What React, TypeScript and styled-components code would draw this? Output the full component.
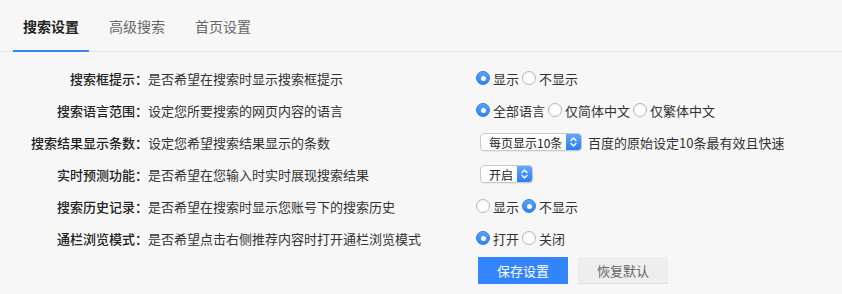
import React, { useState } from "react";
import styled, { createGlobalStyle, css } from "styled-components";

const Global = createGlobalStyle`
  html, body {
    margin: 0;
    padding: 0;
    background: #f7f7f7;
  }
  body {
    font-family: "PingFang SC", "Noto Sans CJK SC", "Noto Sans", sans-serif;
    color: #333;
    font-size: 13px;
  }
  * { box-sizing: border-box; }
`;

const Page = styled.div`
  width: 842px;
  height: 294px;
  background: #f7f7f7;
  overflow: hidden;
`;

const TabBar = styled.div`
  display: flex;
  height: 52px;
  padding-left: 13px;
  border-bottom: 1px solid #e6e6e6;
`;

const Tab = styled.div<{ $active?: boolean }>`
  display: flex;
  align-items: center;
  justify-content: center;
  width: 76px;
  margin-right: 10px;
  margin-bottom: -1px;
  font-size: 14px;
  padding-top: 2px;
  color: ${(p) => (p.$active ? "#222" : "#666")};
  font-weight: ${(p) => (p.$active ? 700 : 400)};
  border-bottom: 2px solid ${(p) => (p.$active ? "#3385ff" : "transparent")};
  cursor: pointer;
`;

const Form = styled.div`
  padding-top: 10px;
`;

const Row = styled.div`
  display: grid;
  grid-template-columns: 148px 328px 1fr;
  align-items: center;
  height: 32px;
`;

const Label = styled.div`
  text-align: right;
  font-weight: 500;
  color: #222;
  white-space: nowrap;
`;

const Desc = styled.div`
  color: #333;
  white-space: nowrap;
`;

const Control = styled.div`
  display: flex;
  align-items: center;
  white-space: nowrap;
`;

const RadioLabel = styled.label`
  display: inline-flex;
  align-items: center;
  margin-right: 3px;
  cursor: pointer;
  color: #333;
`;

const Circle = styled.span<{ $checked?: boolean }>`
  position: relative;
  display: inline-block;
  width: 14px;
  height: 14px;
  border-radius: 50%;
  margin-right: 3px;
  flex: none;
  ${(p) =>
    p.$checked
      ? css`
          background: linear-gradient(#5ba3fa, #2f83f1);
          border: 1px solid #2d7ce6;
          &::after {
            content: "";
            position: absolute;
            left: 50%;
            top: 50%;
            width: 5px;
            height: 5px;
            margin: -2.5px 0 0 -2.5px;
            border-radius: 50%;
            background: #fff;
          }
        `
      : css`
          background: #fff;
          border: 1px solid #b5b5b5;
          box-shadow: inset 0 1px 1px rgba(0, 0, 0, 0.06);
        `}
`;

const SelectBox = styled.div<{ $width: number }>`
  display: flex;
  align-items: stretch;
  width: ${(p) => p.$width}px;
  height: 18px;
  margin-left: 4px;
  border: 1px solid #c9c9c9;
  border-radius: 4px;
  background: #fff;
  box-shadow: 0 1px 1px rgba(0, 0, 0, 0.06);
  overflow: hidden;
  cursor: pointer;
`;

const SelectText = styled.span`
  flex: 1;
  display: flex;
  align-items: center;
  padding-left: 8px;
  font-size: 12px;
  color: #222;
`;

const SelectArrow = styled.span`
  width: 15px;
  display: flex;
  align-items: center;
  justify-content: center;
  background: linear-gradient(#63a8fb, #2a7ef0);
`;

const Hint = styled.span`
  margin-left: 6px;
  color: #333;
`;

const ButtonRow = styled.div`
  display: flex;
  gap: 10px;
  margin-top: 3px;
  padding-left: 478px;
`;

const Button = styled.button<{ $primary?: boolean }>`
  width: 90px;
  height: 27px;
  border: none;
  font-family: inherit;
  font-size: 13px;
  cursor: pointer;
  ${(p) =>
    p.$primary
      ? css`
          background: #3385ff;
          color: #fff;
        `
      : css`
          background: #eeeeee;
          color: #666;
          border-bottom: 1px solid #e0e0e0;
        `}
`;

const Arrows = () => (
  <svg width="9" height="12" viewBox="0 0 9 12" fill="none">
    <path d="M2 4.5 L4.5 2 L7 4.5" stroke="#fff" strokeWidth="1.4" strokeLinecap="round" strokeLinejoin="round" />
    <path d="M2 7.5 L4.5 10 L7 7.5" stroke="#fff" strokeWidth="1.4" strokeLinecap="round" strokeLinejoin="round" />
  </svg>
);

type RadioGroupProps = { options: string[]; value: number; onChange: (i: number) => void };

const RadioGroup = ({ options, value, onChange }: RadioGroupProps) => (
  <Control>
    {options.map((o, i) => (
      <RadioLabel key={o} onClick={() => onChange(i)}>
        <Circle $checked={i === value} />
        {o}
      </RadioLabel>
    ))}
  </Control>
);

const Select = ({ text, width }: { text: string; width: number }) => (
  <SelectBox $width={width}>
    <SelectText>{text}</SelectText>
    <SelectArrow>
      <Arrows />
    </SelectArrow>
  </SelectBox>
);

export default function App() {
  const [tip, setTip] = useState(0);
  const [lang, setLang] = useState(0);
  const [hist, setHist] = useState(1);
  const [bar, setBar] = useState(0);
  return (
    <Page>
      <Global />
      <TabBar>
        <Tab $active>搜索设置</Tab>
        <Tab>高级搜索</Tab>
        <Tab>首页设置</Tab>
      </TabBar>
      <Form>
        <Row>
          <Label>搜索框提示：</Label>
          <Desc>是否希望在搜索时显示搜索框提示</Desc>
          <RadioGroup options={["显示", "不显示"]} value={tip} onChange={setTip} />
        </Row>
        <Row>
          <Label>搜索语言范围：</Label>
          <Desc>设定您所要搜索的网页内容的语言</Desc>
          <RadioGroup options={["全部语言", "仅简体中文", "仅繁体中文"]} value={lang} onChange={setLang} />
        </Row>
        <Row>
          <Label>搜索结果显示条数：</Label>
          <Desc>设定您希望搜索结果显示的条数</Desc>
          <Control>
            <Select text="每页显示10条" width={102} />
            <Hint>百度的原始设定10条最有效且快速</Hint>
          </Control>
        </Row>
        <Row>
          <Label>实时预测功能：</Label>
          <Desc>是否希望在您输入时实时展现搜索结果</Desc>
          <Control>
            <Select text="开启" width={53} />
          </Control>
        </Row>
        <Row>
          <Label>搜索历史记录：</Label>
          <Desc>是否希望在搜索时显示您账号下的搜索历史</Desc>
          <RadioGroup options={["显示", "不显示"]} value={hist} onChange={setHist} />
        </Row>
        <Row>
          <Label>通栏浏览模式：</Label>
          <Desc>是否希望点击右侧推荐内容时打开通栏浏览模式</Desc>
          <RadioGroup options={["打开", "关闭"]} value={bar} onChange={setBar} />
        </Row>
      </Form>
      <ButtonRow>
        <Button $primary>保存设置</Button>
        <Button>恢复默认</Button>
      </ButtonRow>
    </Page>
  );
}
